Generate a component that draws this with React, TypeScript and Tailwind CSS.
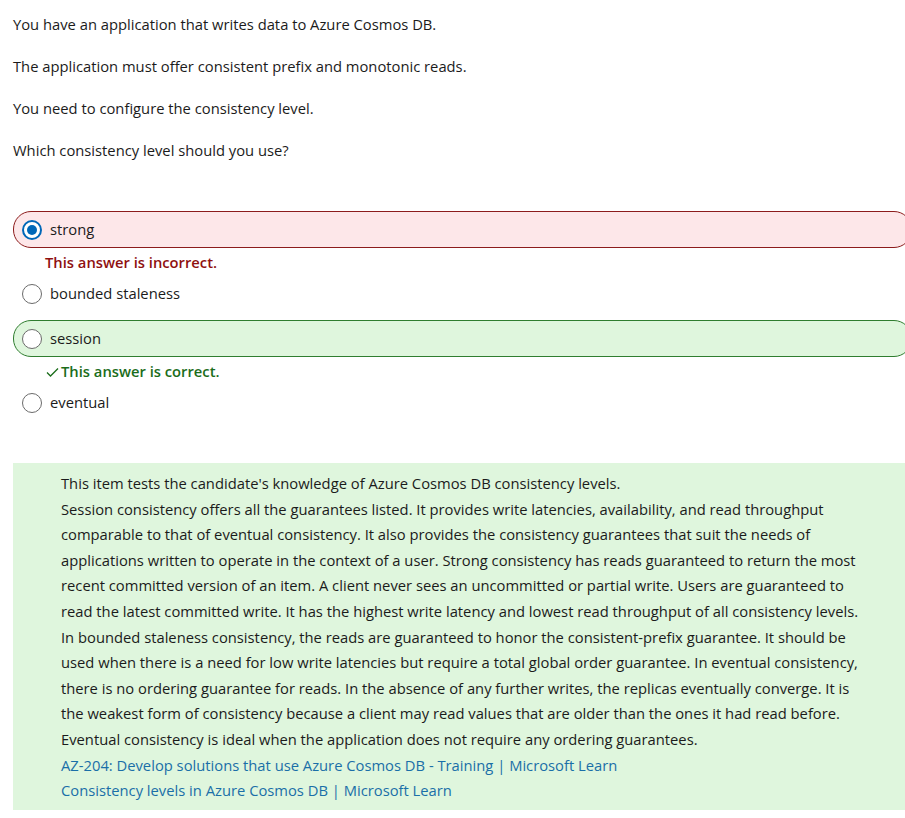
import React from "react";

type Option = {
  label: string;
  selected?: boolean;
  status?: "incorrect" | "correct";
};

const options: Option[] = [
  { label: "strong", selected: true, status: "incorrect" },
  { label: "bounded staleness" },
  { label: "session", status: "correct" },
  { label: "eventual" },
];

const explanation = [
  "This item tests the candidate's knowledge of Azure Cosmos DB consistency levels.",
  "Session consistency offers all the guarantees listed. It provides write latencies, availability, and read throughput",
  "comparable to that of eventual consistency. It also provides the consistency guarantees that suit the needs of",
  "applications written to operate in the context of a user. Strong consistency has reads guaranteed to return the most",
  "recent committed version of an item. A client never sees an uncommitted or partial write. Users are guaranteed to",
  "read the latest committed write. It has the highest write latency and lowest read throughput of all consistency levels.",
  "In bounded staleness consistency, the reads are guaranteed to honor the consistent-prefix guarantee. It should be",
  "used when there is a need for low write latencies but require a total global order guarantee. In eventual consistency,",
  "there is no ordering guarantee for reads. In the absence of any further writes, the replicas eventually converge. It is",
  "the weakest form of consistency because a client may read values that are older than the ones it had read before.",
  "Eventual consistency is ideal when the application does not require any ordering guarantees.",
];

const Radio = ({ checked }: { checked?: boolean }) =>
  checked ? (
    <span className="flex h-5 w-5 shrink-0 items-center justify-center rounded-full border-2 border-[#0067b8] bg-white">
      <span className="h-[10px] w-[10px] rounded-full bg-[#0067b8]" />
    </span>
  ) : (
    <span className="h-5 w-5 shrink-0 rounded-full border border-[#6b6b6b] bg-white" />
  );

const OptionRow = ({ option }: { option: Option }) => {
  const box =
    option.status === "incorrect"
      ? "border border-[#8c1c1c] bg-[#fde7e9]"
      : option.status === "correct"
      ? "border border-[#2f7d2f] bg-[#dff6dd]"
      : "border border-transparent";

  return (
    <div>
      <div className={`flex h-[37px] items-center gap-2 rounded-[18px] pl-2 ${box}`}>
        <Radio checked={option.selected} />
        <span>{option.label}</span>
      </div>
      {option.status === "incorrect" && (
        <div className="mt-1 pl-8 font-semibold leading-[21px] text-[#8f1010]">
          This answer is incorrect.
        </div>
      )}
      {option.status === "correct" && (
        <div className="mt-1 flex items-center pl-8 font-semibold leading-[21px] text-[#1b6d1b]">
          <svg width="15" height="12" viewBox="0 0 15 12" className="mr-px">
            <path d="M2 6.5 L5.5 10 L13 2.5" fill="none" stroke="currentColor" strokeWidth="1.3" />
          </svg>
          This answer is correct.
        </div>
      )}
    </div>
  );
};

export default function App() {
  return (
    <div className="w-full overflow-hidden bg-white font-['Open_Sans',sans-serif] text-[14.75px] text-[#1b1b1b]">
      <div className="w-[912px] pl-[13px] pt-[14px] pb-2">
        <div className="flex flex-col gap-[21px] leading-[21px]">
          <p>You have an application that writes data to Azure Cosmos DB.</p>
          <p>The application must offer consistent prefix and monotonic reads.</p>
          <p>You need to configure the consistency level.</p>
          <p>Which consistency level should you use?</p>
        </div>

        <div className="mt-[50px] flex flex-col gap-[2px]">
          {options.map((o, i) => (
            <div key={o.label} className={i === 2 ? "mt-[6px]" : ""}>
              <OptionRow option={o} />
            </div>
          ))}
        </div>

        <div className="mt-[42px] bg-[#dff6dd] pb-[6px] pl-[48px] pt-[8px] leading-[25.6px]">
          {explanation.map((line) => (
            <div key={line} className="whitespace-nowrap">
              {line}
            </div>
          ))}
          <a href="#" className="block whitespace-nowrap text-[#1a6fa8]">
            AZ-204: Develop solutions that use Azure Cosmos DB - Training | Microsoft Learn
          </a>
          <a href="#" className="block whitespace-nowrap text-[#1a6fa8]">
            Consistency levels in Azure Cosmos DB | Microsoft Learn
          </a>
        </div>
      </div>
    </div>
  );
}
